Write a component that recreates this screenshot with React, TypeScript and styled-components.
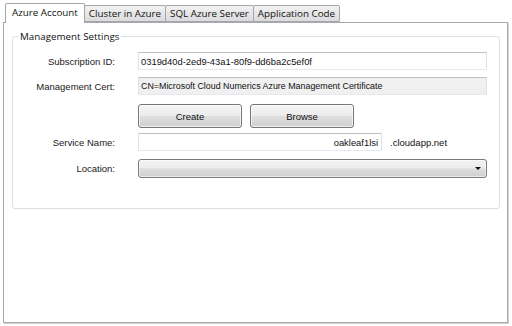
import React from "react"
import styled, { createGlobalStyle } from "styled-components"

const GlobalStyle = createGlobalStyle`
  html, body {
    margin: 0;
    padding: 0;
    background: #ffffff;
  }
  body {
    font-family: "Liberation Sans", Arial, sans-serif;
    color: #111;
  }
`

const Window = styled.div`
  width: 512px;
  height: 326px;
  box-sizing: border-box;
  padding: 0 4px 3px 3px;
  display: flex;
  flex-direction: column;
  background: #ffffff;
`

const TabStrip = styled.div`
  display: flex;
  align-items: flex-end;
  height: 22px;
  padding-left: 2px;
  position: relative;
  z-index: 1;
`

const Tab = styled.div<{ $active?: boolean }>`
  box-sizing: border-box;
  display: flex;
  align-items: center;
  justify-content: center;
  height: ${(p) => (p.$active ? "20px" : "17px")};
  margin-bottom: ${(p) => (p.$active ? "-1px" : "0")};
  margin-right: -1px;
  padding: ${(p) => (p.$active ? "0 6px 2px" : "0 4px 0")};
  border: 1px solid #a3a6ad;
  border-bottom: ${(p) => (p.$active ? "none" : "1px solid #a3a6ad")};
  border-radius: 2px 2px 0 0;
  background: ${(p) =>
    p.$active ? "#ffffff" : "linear-gradient(#f3f3f3, #e6e6e6 50%, #dcdcdc)"};
  font-family: "Open Sans", "Noto Sans", sans-serif;
  font-size: 9.8px;
  color: #111;
  white-space: nowrap;
  position: relative;
  z-index: ${(p) => (p.$active ? 2 : 1)};
`

const Panel = styled.div`
  flex: 1;
  box-sizing: border-box;
  border: 1px solid #a7a9ae;
  box-shadow: 1px 1px 0 #d2d2d2;
  background: #ffffff;
  padding: 7px 8px 0 8px;
`

const GroupBox = styled.fieldset`
  margin: 0;
  padding: 9px 12px 30px 0;
  border: 1px solid #d5dfe5;
  border-radius: 3px;
`

const Legend = styled.legend`
  margin-left: 5px;
  padding: 0 2px;
  font-family: "Open Sans", "Noto Sans", sans-serif;
  font-size: 9.8px;
  color: #111;
`

const Form = styled.div`
  display: grid;
  grid-template-columns: 102px 349px;
  column-gap: 23px;
  align-items: center;
`

const Label = styled.div<{ $top: number }>`
  grid-column: 1;
  text-align: right;
  font-size: 9.5px;
  color: #1a1a1a;
  margin-top: ${(p) => p.$top}px;
  white-space: nowrap;
`

const Cell = styled.div<{ $top: number }>`
  grid-column: 2;
  display: flex;
  align-items: center;
  margin-top: ${(p) => p.$top}px;
`

const TextBox = styled.div<{ $readOnly?: boolean; $width?: number; $right?: boolean }>`
  box-sizing: border-box;
  width: ${(p) => (p.$width ? `${p.$width}px` : "100%")};
  height: 18px;
  display: flex;
  align-items: center;
  justify-content: ${(p) => (p.$right ? "flex-end" : "flex-start")};
  padding: 0 3px 0 2px;
  border: 1px solid;
  border-color: #bcc0c7 #dde2e8 #e3e9ef #dde2e8;
  border-radius: 1px;
  background: ${(p) => (p.$readOnly ? "#f0f0f0" : "#ffffff")};
  font-size: ${(p) => (p.$readOnly ? "8.9px" : "9.4px")};
  white-space: nowrap;
  overflow: hidden;
`

const ButtonRow = styled.div`
  display: flex;
  gap: 8px;
`

const Button = styled.div`
  box-sizing: border-box;
  width: 104px;
  height: 24px;
  display: flex;
  align-items: center;
  justify-content: center;
  border: 1px solid #767676;
  border-radius: 3px;
  background: linear-gradient(#f4f4f4, #ececec 48%, #dedede 52%, #d0d0d0);
  box-shadow: inset 0 0 0 1px rgba(255, 255, 255, 0.7);
  font-size: 9.5px;
  color: #111;
`

const Suffix = styled.span`
  margin-left: 8px;
  font-size: 9.5px;
`

const ComboBox = styled.div`
  box-sizing: border-box;
  width: 100%;
  height: 19px;
  display: flex;
  align-items: center;
  justify-content: flex-end;
  padding-right: 4px;
  border: 1px solid #7a7a7a;
  border-radius: 3px;
  background: linear-gradient(#f3f3f3, #ebebeb 48%, #dddddd 52%, #cfcfcf);
  box-shadow: inset 0 0 0 1px rgba(255, 255, 255, 0.6);
`

const Arrow = styled.span`
  width: 0;
  height: 0;
  border-left: 3px solid transparent;
  border-right: 3px solid transparent;
  border-top: 3px solid #111;
  margin-right: 1px;
`

const tabs = ["Azure Account", "Cluster in Azure", "SQL Azure Server", "Application Code"]

export default function App() {
  return (
    <>
      <GlobalStyle />
      <Window>
        <TabStrip>
          {tabs.map((t, i) => (
            <Tab key={t} $active={i === 0}>
              {t}
            </Tab>
          ))}
        </TabStrip>
        <Panel>
          <GroupBox>
            <Legend>Management Settings</Legend>
            <Form>
              <Label $top={0}>Subscription ID:</Label>
              <Cell $top={0}>
                <TextBox>0319d40d-2ed9-43a1-80f9-dd6ba2c5ef0f</TextBox>
              </Cell>

              <Label $top={7}>Management Cert:</Label>
              <Cell $top={7}>
                <TextBox $readOnly>CN=Microsoft Cloud Numerics Azure Management Certificate</TextBox>
              </Cell>

              <Cell $top={9}>
                <ButtonRow>
                  <Button>Create</Button>
                  <Button>Browse</Button>
                </ButtonRow>
              </Cell>

              <Label $top={5}>Service Name:</Label>
              <Cell $top={5}>
                <TextBox $width={244} $right>
                  oakleaf1lsi
                </TextBox>
                <Suffix>.cloudapp.net</Suffix>
              </Cell>

              <Label $top={8}>Location:</Label>
              <Cell $top={8}>
                <ComboBox>
                  <Arrow />
                </ComboBox>
              </Cell>
            </Form>
          </GroupBox>
        </Panel>
      </Window>
    </>
  )
}
